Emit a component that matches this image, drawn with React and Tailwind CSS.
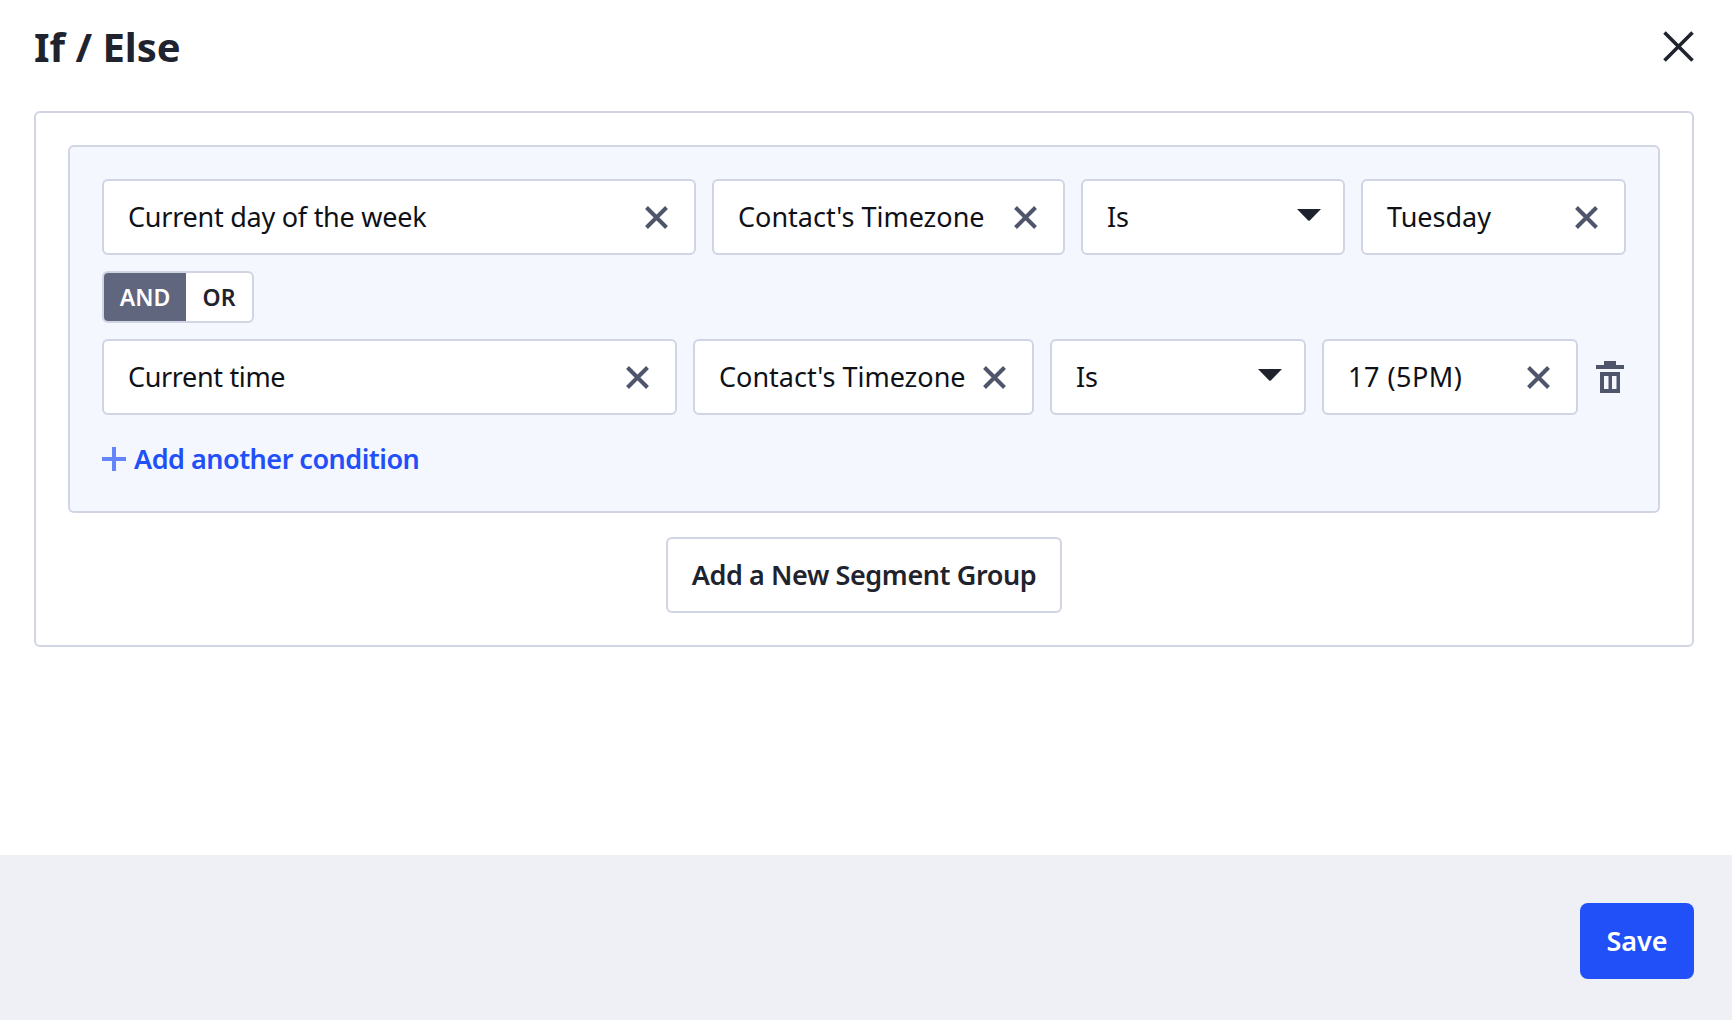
const Clear = ({ size = 23, sw = 4, color = "#4f556b" }) => (
  <svg width={size} height={size} viewBox="0 0 23 23" className="shrink-0 mt-[1px]">
    <path d="M1.5 1.5 L21.5 21.5 M21.5 1.5 L1.5 21.5" stroke={color} strokeWidth={sw} fill="none" />
  </svg>
);

const Caret = () => (
  <svg width="24" height="12" viewBox="0 0 24 12" className="shrink-0 mb-[4px]">
    <path d="M0 0 H24 L12.8 11.6 Q12 12 11.2 11.6 Z" fill="#1f232e" />
  </svg>
);

const Trash = () => (
  <svg width="28" height="32" viewBox="0 0 28 32" className="shrink-0">
    <path
      fillRule="evenodd"
      d="M8 0 H20 V4 H28 V8 H0 V4 H8 Z M4 11 H24 V32 H4 Z M8 15 V28 H12.5 V15 Z M16 15 V28 H20.5 V15 Z"
      fill="#4f556b"
    />
  </svg>
);

// one select box of a condition row
const Field = ({ label, width, caret, tracking = "tracking-[-0.2px]" }) => (
  <div
    className={`${width} h-[76px] shrink-0 flex items-center justify-between pl-[24px] bg-white border-2 border-[#d0d4e3] rounded-[6px] ${caret ? "pr-[22px]" : "pr-[26px]"}`}
  >
    <span className={`text-[27px] ${tracking} text-[#0f1117] whitespace-nowrap`}>{label}</span>
    {caret ? <Caret /> : <Clear />}
  </div>
);

export default function App() {
  return (
    <div
      className="w-full h-screen flex flex-col bg-white text-[#1f232e]"
      style={{ fontFamily: '"Noto Sans", "Open Sans", sans-serif' }}
    >
      <div className="flex-1 pl-[34px] pr-[38px]">
        <div className="h-[111px] flex items-start justify-between pt-[22px]">
          <h1 className="text-[40px] leading-[50px] font-bold">If / Else</h1>
          <div className="mt-[9px]">
            <svg width="31" height="31" viewBox="0 0 31 31">
              <path d="M1.5 1.5 L29.5 29.5 M29.5 1.5 L1.5 29.5" stroke="#1f232e" strokeWidth="3.6" fill="none" />
            </svg>
          </div>
        </div>

        <div className="border-2 border-[#d0d4e3] rounded-[6px] p-[32px] flex flex-col items-center">
          <div className="w-full h-[368px] bg-[#f4f7fe] border-2 border-[#d0d4e3] rounded-[6px] p-[32px]">
            <div className="flex gap-[16px]">
              <Field label="Current day of the week" width="w-[594px]" tracking="tracking-[-0.25px]" />
              <Field label="Contact's Timezone" width="w-[353px]" tracking="tracking-[0px]" />
              <Field label="Is" width="w-[264px]" caret />
              <Field label="Tuesday" width="w-[265px]" tracking="tracking-[0px]" />
            </div>

            <div className="mt-[16px] w-[152px] h-[52px] flex border-2 border-[#d0d4e3] rounded-[6px] bg-white overflow-hidden text-[23px] font-semibold">
              <div className="w-[82px] flex items-center justify-center bg-[#60667e] text-white">AND</div>
              <div className="flex-1 flex items-center justify-center">OR</div>
            </div>

            <div className="mt-[16px] flex items-center gap-[16px]">
              <Field label="Current time" width="w-[575px]" tracking="tracking-[-0.35px]" />
              <Field label="Contact's Timezone" width="w-[341px]" tracking="tracking-[0px]" />
              <Field label="Is" width="w-[256px]" caret />
              <Field label="17 (5PM)" width="w-[256px]" tracking="tracking-[0.5px]" />
              <div className="ml-[2px]">
                <Trash />
              </div>
            </div>

            <div className="mt-[26px] flex items-center gap-[8px] text-[#214ff8]">
              <svg width="24" height="24" viewBox="0 0 24 24" className="shrink-0 mb-[1px]">
                <path d="M12 0 V24 M0 12 H24" stroke="#6285fb" strokeWidth="4" fill="none" />
              </svg>
              <span className="text-[27px] tracking-[-0.5px] leading-[36px] font-semibold">Add another condition</span>
            </div>
          </div>

          <button className="mt-[24px] w-[396px] h-[76px] bg-white border-2 border-[#d0d4e3] rounded-[6px] text-[27px] tracking-[-0.4px] font-semibold">
            Add a New Segment Group
          </button>
        </div>
      </div>

      <div className="h-[165px] shrink-0 bg-[#eef0f6] flex justify-end items-start pt-[48px] px-[38px]">
        <button className="w-[114px] h-[76px] bg-[#214ff8] rounded-[8px] text-white text-[27px] font-semibold">
          Save
        </button>
      </div>
    </div>
  );
}
